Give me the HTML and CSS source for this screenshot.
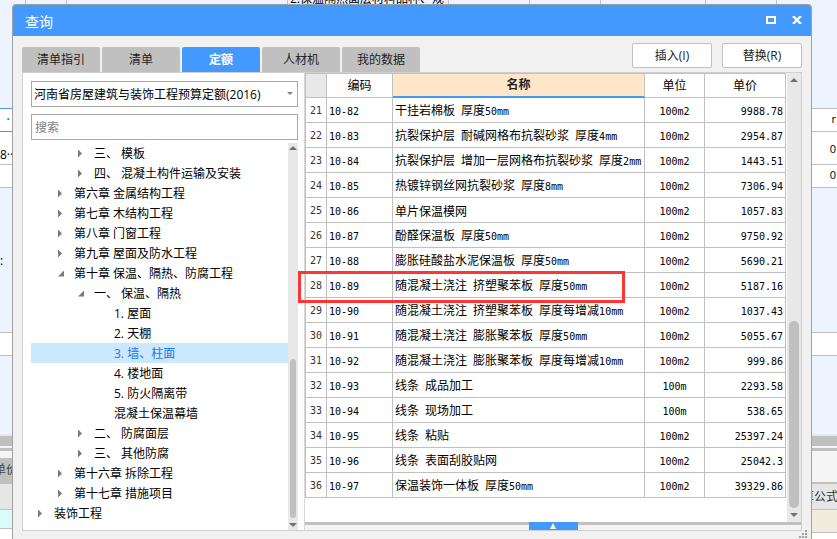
FILE: index.html
```
<!DOCTYPE html>
<html lang="zh-CN">
<head>
<meta charset="utf-8">
<title>查询</title>
<link rel="stylesheet" href="styles.css">
</head>
<body>
<div class="sheet">
  <div class="sheet-top">
    <i class="c1"></i><i class="c2"></i><i class="c3"></i><span class="c4">2.保温隔热面层材料品种、规</span><i class="c5"></i><i class="c6"></i><i class="c7"></i><i class="c8"></i>
  </div>
  <div class="side left">
    <div class="r-head tint"></div>
    <div class="r-a blue">·</div>
    <div class="r-b dark">8··</div>
    <div class="r-c"></div>
    <div class="r-d tint">:</div>
    <div class="r-c"></div>
    <div class="r-e tint"></div>
    <div class="r-split"></div>
    <div class="r-tabs"><span class="tabname">单价</span></div>
    <div class="r-hdr"></div>
    <div class="r-edit cyan"></div>
  </div>
  <div class="side right">
    <div class="r-head tint"></div>
    <div class="r-a end">r</div>
    <div class="r-b end">0</div>
    <div class="r-c end">0</div>
    <div class="r-d tint"></div>
    <div class="r-c"></div>
    <div class="r-e tint"></div>
    <div class="r-split"></div>
    <div class="r-tabs"></div>
    <div class="r-hdr"><span class="formula">算公式</span></div>
    <div class="r-edit cream"></div>
  </div>
</div>

<main class="dialog">
  <header class="titlebar">
    <h1>查询</h1>
    <button class="win" aria-label="最大化"><svg width="10" height="8" viewBox="0 0 10 8"><path d="M0 0H10V8H0Z M2 2V6H8V2Z" fill="#fff" fill-rule="evenodd"/></svg></button>
    <button class="win" aria-label="关闭"><svg width="10" height="8" viewBox="0 0 10 8"><path d="M1 0L9 8M9 0L1 8" stroke="#fff" stroke-width="2.4"/></svg></button>
  </header>
  <div class="toolbar">
    <div class="tabs" role="tablist">
      <button role="tab">清单指引</button>
      <button role="tab">清单</button>
      <button role="tab" class="active" aria-selected="true">定额</button>
      <button role="tab">人材机</button>
      <button role="tab">我的数据</button>
    </div>
    <button class="btn">插入(I)</button>
    <button class="btn">替换(R)</button>
  </div>
  <div class="panel">
    <section class="nav">
      <div class="combo">
        <select aria-label="定额库"><option>河南省房屋建筑与装饰工程预算定额(2016)</option></select>
      </div>
      <input class="search" type="text" placeholder="搜索" aria-label="搜索">
      <div class="treebox">
        <ul class="tree" role="tree">
          <li class="l3 shut">三、 模板</li>
          <li class="l3 shut">四、 混凝土构件运输及安装</li>
          <li class="l2 shut">第六章 金属结构工程</li>
          <li class="l2 shut">第七章 木结构工程</li>
          <li class="l2 shut">第八章 门窗工程</li>
          <li class="l2 shut">第九章 屋面及防水工程</li>
          <li class="l2 open">第十章 保温、隔热、防腐工程</li>
          <li class="l3 open">一、 保温、隔热</li>
          <li class="l4">1. 屋面</li>
          <li class="l4">2. 天棚</li>
          <li class="l4 selected">3. 墙、柱面</li>
          <li class="l4">4. 楼地面</li>
          <li class="l4">5. 防火隔离带</li>
          <li class="l4">混凝土保温幕墙</li>
          <li class="l3 shut">二、 防腐面层</li>
          <li class="l3 shut">三、 其他防腐</li>
          <li class="l2 shut">第十六章 拆除工程</li>
          <li class="l2 shut">第十七章 措施项目</li>
          <li class="l1 shut">装饰工程</li>
        </ul>
        <div class="scroll slim"><i class="up"></i><i class="track"></i><i class="thumb"></i><i class="down"></i></div>
      </div>
    </section>
    <section class="list">
      <div class="gridbox">
        <table>
          <colgroup><col class="w-no"><col class="w-code"><col><col class="w-unit"><col class="w-price"></colgroup>
          <thead><tr><th class="corner"></th><th>编码</th><th class="sorted">名称</th><th>单位</th><th>单价</th></tr></thead>
          <tbody>
            <tr><th>21</th><td><b>10-82</b></td><td>干挂岩棉板<b> </b>厚度<b>50mm</b></td><td><b>100m2</b></td><td><b>9988.78</b></td></tr>
            <tr><th>22</th><td><b>10-83</b></td><td>抗裂保护层<b> </b>耐碱网格布抗裂砂浆<b> </b>厚度<b>4mm</b></td><td><b>100m2</b></td><td><b>2954.87</b></td></tr>
            <tr><th>23</th><td><b>10-84</b></td><td>抗裂保护层<b> </b>增加一层网格布抗裂砂浆<b> </b>厚度<b>2mm</b></td><td><b>100m2</b></td><td><b>1443.51</b></td></tr>
            <tr><th>24</th><td><b>10-85</b></td><td>热镀锌钢丝网抗裂砂浆<b> </b>厚度<b>8mm</b></td><td><b>100m2</b></td><td><b>7306.94</b></td></tr>
            <tr><th>25</th><td><b>10-86</b></td><td>单片保温模网</td><td><b>100m2</b></td><td><b>1057.83</b></td></tr>
            <tr><th>26</th><td><b>10-87</b></td><td>酚醛保温板<b> </b>厚度<b>50mm</b></td><td><b>100m2</b></td><td><b>9750.92</b></td></tr>
            <tr><th>27</th><td><b>10-88</b></td><td>膨胀硅酸盐水泥保温板<b> </b>厚度<b>50mm</b></td><td><b>100m2</b></td><td><b>5690.21</b></td></tr>
            <tr><th class="marked">28<i class="marker"></i></th><td><b>10-89</b></td><td>随混凝土浇注<b> </b>挤塑聚苯板<b> </b>厚度<b>50mm</b></td><td><b>100m2</b></td><td><b>5187.16</b></td></tr>
            <tr><th>29</th><td><b>10-90</b></td><td>随混凝土浇注<b> </b>挤塑聚苯板<b> </b>厚度每增减<b>10mm</b></td><td><b>100m2</b></td><td><b>1037.43</b></td></tr>
            <tr><th>30</th><td><b>10-91</b></td><td>随混凝土浇注<b> </b>膨胀聚苯板<b> </b>厚度<b>50mm</b></td><td><b>100m2</b></td><td><b>5055.67</b></td></tr>
            <tr><th>31</th><td><b>10-92</b></td><td>随混凝土浇注<b> </b>膨胀聚苯板<b> </b>厚度每增减<b>10mm</b></td><td><b>100m2</b></td><td><b>999.86</b></td></tr>
            <tr><th>32</th><td><b>10-93</b></td><td>线条<b> </b>成品加工</td><td><b>100m</b></td><td><b>2293.58</b></td></tr>
            <tr><th>33</th><td><b>10-94</b></td><td>线条<b> </b>现场加工</td><td><b>100m</b></td><td><b>538.65</b></td></tr>
            <tr><th>34</th><td><b>10-95</b></td><td>线条<b> </b>粘贴</td><td><b>100m2</b></td><td><b>25397.24</b></td></tr>
            <tr><th>35</th><td><b>10-96</b></td><td>线条<b> </b>表面刮胶贴网</td><td><b>100m2</b></td><td><b>25042.3</b></td></tr>
            <tr><th>36</th><td><b>10-97</b></td><td>保温装饰一体板<b> </b>厚度<b>50mm</b></td><td><b>100m2</b></td><td><b>39329.86</b></td></tr>
          </tbody>
        </table>
        <div class="scroll wide"><i class="up"></i><i class="track"></i><i class="thumb"></i><i class="down"></i></div>
      </div>
      <div class="drawer"><button aria-label="展开"><i class="tri"></i></button></div>
    </section>
  </div>
  <svg class="grip" width="9" height="9" viewBox="0 0 9 9" fill="#a0a0a0"><path d="M6 0h2v2h-2zM3 3h2v2h-2zM6 3h2v2h-2zM0 6h2v2h-2zM3 6h2v2h-2zM6 6h2v2h-2z"/></svg>
</main>
</body>
</html>
```
FILE: styles.css
```
* { box-sizing: border-box; }
html, body { height: 100%; }
body {
  margin: 0;
  position: relative;
  overflow: hidden;
  font: 12px/20px "Open Sans", "Noto Sans CJK SC", sans-serif;
  color: #000;
  background: #fff;
}
button, input, select { font: inherit; color: inherit; margin: 0; padding: 0; border: 0; border-radius: 0; }

/* worksheet behind the dialog */
.sheet {
  display: grid;
  grid-template: 4px 1fr / 12px 1fr 25px;
  height: 100%;
  overflow: hidden;
}
.sheet-top { grid-column: 1 / -1; display: flex; background: #edf4ff; overflow: hidden; }
.sheet-top > * { flex: none; border-right: 1px solid #c0c0c0; }
.c1 { width: 26px; }
.c2 { width: 41px; }
.c3 { width: 221px; }
.c4 { width: 161px; padding-left: 2px; line-height: 20px; margin-top: -11px; white-space: nowrap; overflow: hidden; }
.c5 { width: 81px; }
.c6 { width: 71px; }
.c7 { width: 105px; }
.c8 { width: 71px; }
.side { overflow: hidden; }
.right { grid-column: 3; }
.side > div { border-bottom: 1px solid #c0c0c0; overflow: hidden; white-space: nowrap; }
.side > .tint { background: #edf4ff; }
.side > .end { text-align: right; padding-right: 1px; font-size: 11px; }
.r-head { height: 105px; }
.r-a { height: 23px; }
.r-b { height: 33px; line-height: 33px; }
.left .r-b { padding-top: 6px; }
.side .r-c { height: 23px; }
.r-d { height: 145px; line-height: 145px; }
.side .r-e { height: 78px; border-bottom: 0; }
.side .r-split { height: 17px; background: linear-gradient(#e8e8e8 2px, #c0c0c0 2px 12px, #f5f5f5 12px 14px, #c0c0c0 14px); border: 0; }
.side .r-tabs { height: 33px; background: #f5f5f5; border-bottom: 2px solid #c0c0c0; }
.r-hdr { height: 26px; background: #e6e6e6; line-height: 25px; }
.r-edit { height: 19px; }
.right .r-edit { height: 23px; }
.left > .r-head, .left > .r-a { border-color: #4499ff; }
.blue { color: #2f7fc8; text-align: right; padding-right: 2px; font-weight: 700; }
.tabname { display: block; margin-top: 7px; height: 24px; line-height: 24px; background: #c0c0c0; color: #444; text-indent: -6px; }
.formula { display: block; width: 36px; margin-left: -10px; color: #333; }
.cyan { background: #dbfbfb; }
.cream { background: #f0eddf; }

/* dialog */
.dialog {
  position: absolute;
  top: 4px; right: 25px; bottom: 0; left: 12px;
  display: flex;
  flex-direction: column;
  background: #f1f1f1;
  border: 1px solid #a0a0a0;
  border-bottom: 0;
  border-radius: 4px 4px 0 0;
  overflow: hidden;
}
.titlebar { display: flex; align-items: center; gap: 16px; height: 31px; flex: none; padding: 0 9px 0 12px; background: #4499ff; color: #fff; }
.titlebar h1 { flex: 1; margin: 0; padding-top: 2px; font-size: 14px; font-weight: 400; }
.win { display: flex; width: 10px; height: 10px; background: none; }
.toolbar { display: flex; gap: 10px; height: 36px; flex: none; padding: 7px 9px 0; }
.tabs { display: flex; gap: 2px; flex: 1; padding-top: 4px; }
.tabs button { width: 78px; height: 25px; background: #c0c0c0; color: #222; border-radius: 2px 2px 0 0; }
.tabs .active { background: #4499ff; color: #fff; font-weight: 700; }
.btn { width: 80px; height: 25px; background: #fff; border: 1px solid #c0c0c0; border-radius: 2px; color: #222; }
.panel { display: flex; flex: 1; min-height: 0; margin: 0 9px 8px; border: 1px solid #d0d0d0; background: #fff; }

.nav { display: flex; flex-direction: column; width: 282px; flex: none; padding: 8px 6px 0 8px; border-right: 1px solid #d8d8d8; }
.combo { position: relative; height: 26px; flex: none; margin-bottom: 7px; }
.combo select { width: 100%; height: 26px; padding: 1px 16px 0 2px; appearance: none; background: #fff; border: 1px solid #a8a8a8; color: #000; }
.combo::after { content: ""; position: absolute; right: 5px; top: 11px; border: 3px solid transparent; border-top-color: #808080; border-bottom: 0; }
.search { width: 100%; height: 26px; flex: none; padding: 1px 3px 0; background: #fff; border: 1px solid #a8a8a8; }
.search::placeholder { color: #808080; opacity: 1; }
.treebox { display: flex; flex: 1; min-height: 0; margin-top: 3px; }
.tree { flex: 1; margin: 0; padding: 0; list-style: none; overflow: hidden; }
.tree li { display: flex; align-items: center; height: 20px; line-height: 22px; white-space: pre; }
.tree li::before { content: ""; width: 16px; flex: none; }
.l1 { padding-left: 7px; }
.l2 { padding-left: 27px; }
.l3 { padding-left: 47px; }
.l4 { padding-left: 67px; }
.tree li { padding-top: 1px; }
.tree .selected { background: #cce8ff; color: #1478f0; }
.tree .shut::before { height: 8px; background: #7a7a7a; clip-path: polygon(0 0, 4px 4px, 0 8px); }
.tree .open::before { height: 6px; background: #7a7a7a; clip-path: polygon(6px 0, 6px 6px, 0 6px); }

/* scroll bars */
.scroll { display: flex; flex-direction: column; align-items: center; flex: none; background: #e8e8e8; }
.slim { width: 10px; padding: 3px 0 3px; }
.wide { margin-left: 1px; padding: 5px 0 5px; }
.up { border: 4px solid transparent; border-top: 0; border-bottom-color: #707070; }
.down { border: 4px solid transparent; border-bottom: 0; border-top-color: #707070; }
.track { flex: 208; }
.thumb { flex: 159; width: 6px; margin-bottom: 5px; background: #c0c0c0; border-radius: 3px; }
.wide .track { flex: 239; }
.wide .thumb { flex: 187; width: 10px; border-radius: 5px; }

/* quota table */
.list { display: flex; flex-direction: column; flex: 1; min-width: 0; }
.gridbox { display: flex; flex: 1; align-items: flex-start; min-height: 0; }
.gridbox .scroll { align-self: stretch; width: 14px; }
table { flex: 1; table-layout: fixed; width: 100%; border-collapse: separate; border-spacing: 0; border-left: 1px solid #c0c0c0; border-top: 1px solid #c0c0c0; }
.w-no { width: 21px; }
.w-code { width: 66px; }
.w-unit { width: 60px; }
.w-price { width: 81px; }
th, td { height: 25px; padding: 3px 2px 0; border-right: 1px solid #c0c0c0; border-bottom: 1px solid #c0c0c0; font-weight: 400; line-height: 18px; white-space: pre; text-align: left; }
thead th { height: 24px; padding: 0; text-align: center; }
thead .corner { background: #e8e8e8; }
thead .sorted { background: #ffe6c8; border-bottom: 2px solid #4499ff; font-weight: 700; color: #222; }
tbody th { padding: 1px 0 0; text-align: center; color: #333; font: 10px/18px "DejaVu Sans Mono", monospace; }
td b { font: 10px/18px "DejaVu Sans Mono", monospace; }
td:nth-child(4) { text-align: center; }
td:nth-child(5) { text-align: right; }
.marked { position: relative; }
.marker { position: absolute; left: -8px; top: -2px; width: 327px; height: 32px; border: 3px solid #ff3535; z-index: 1; }
.drawer { height: 8px; flex: none; display: flex; justify-content: center; background: linear-gradient(#c0c0c0 3px, #f4f4f4 3px); }
.drawer button { display: flex; align-items: center; justify-content: center; width: 49px; height: 8px; background: #4499ff; }
.tri { border: 3px solid transparent; border-top: 0; border-bottom: 6px solid #fff; }
.grip { position: absolute; right: 3px; bottom: 0; }
```
